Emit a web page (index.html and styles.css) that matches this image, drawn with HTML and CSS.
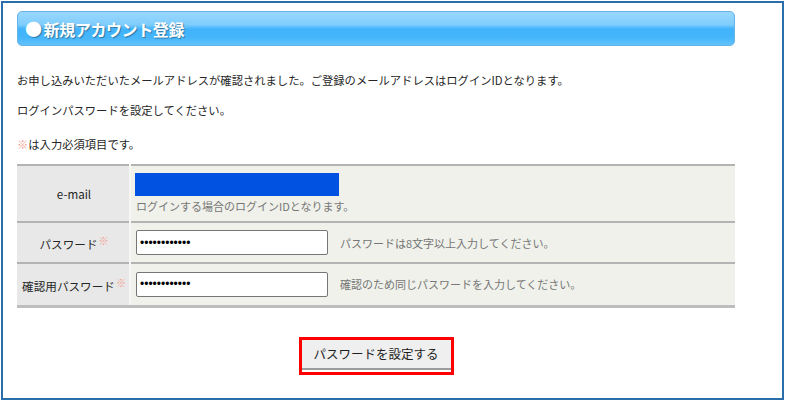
FILE: index.html
```html
<!DOCTYPE html>
<html lang="ja">
<head>
<meta charset="utf-8">
<title>新規アカウント登録</title>
<link rel="stylesheet" href="styles.css">
</head>
<body>
<div class="page">
  <h1 class="title"><span class="title-dot">●</span>新規アカウント登録</h1>

  <p class="lead">お申し込みいただいたメールアドレスが確認されました。ご登録のメールアドレスはログインIDとなります。</p>
  <p class="lead lead-second">ログインパスワードを設定してください。</p>
  <p class="lead lead-note"><span class="req">※</span>は入力必須項目です。</p>

  <table class="form-table">
    <tr class="row-mail">
      <th>e-mail</th>
      <td>
        <div class="mail-value"></div>
        <div class="hint hint-below">ログインする場合のログインIDとなります。</div>
      </td>
    </tr>
    <tr class="row-pass">
      <th>パスワード<span class="req req-sup">※</span></th>
      <td>
        <div class="field">
          <input class="pass-input" type="password" value="password1234">
          <span class="hint">パスワードは8文字以上入力してください。</span>
        </div>
      </td>
    </tr>
    <tr class="row-confirm">
      <th>確認用パスワード<span class="req req-sup">※</span></th>
      <td>
        <div class="field">
          <input class="pass-input" type="password" value="password1234">
          <span class="hint">確認のため同じパスワードを入力してください。</span>
        </div>
      </td>
    </tr>
  </table>

  <div class="actions">
    <div class="submit-frame">
      <button class="submit" type="button">パスワードを設定する</button>
    </div>
  </div>
</div>
</body>
</html>
```

FILE: styles.css
```css
html, body {
  margin: 0;
  padding: 0;
  background: #ffffff;
}

body {
  font-family: "Noto Sans CJK JP", "Noto Sans", sans-serif;
  color: #262626;
}

/* outer frame of the form page */
.page {
  margin: 1px 0 0 1px;
  width: 783px;
  height: 399px;
  box-sizing: border-box;
  border: 2px solid #2a6fab;
  padding: 8px 0 0 14px;
}

/* glossy blue heading bar */
.title {
  margin: 0;
  width: 718px;
  height: 35px;
  box-sizing: border-box;
  border: 1px solid #66b4e6;
  border-radius: 5px;
  background: linear-gradient(to bottom,
    #9ad8fe 0%,
    #7fcdfd 38%,
    #40b3fb 52%,
    #46b6fb 78%,
    #63c3fd 100%);
  display: flex;
  align-items: center;
  padding: 0 0 0 7px;
  color: #ffffff;
  font-size: 16px;
  font-weight: bold;
  letter-spacing: -0.4px;
  text-shadow: 1px 1px 1px rgba(0, 0, 0, 0.35);
}

.title-dot {
  font-size: 17px;
  margin-right: 2px;
}

/* intro text */
.lead {
  margin: 26px 0 0 0;
  font-size: 11.3px;
  line-height: 16px;
}

.lead-second {
  margin-top: 14px;
}

.lead-note {
  margin-top: 18px;
}

.req {
  color: #f59a8e;
}

.req-sup {
  font-size: 10px;
  vertical-align: 4px;
  margin-left: 1px;
}

/* form table */
.form-table {
  margin-top: 12px;
  width: 718px;
  border-collapse: collapse;
  border-bottom: 3px solid #bdbdbd;
}

.form-table tr {
  border-top: 2px solid #b3b3b3;
}

.form-table th {
  width: 113px;
  box-sizing: border-box;
  background: #e8e8e8;
  border-right: 2px solid #f6f6f4;
  font-weight: normal;
  font-size: 11.6px;
  color: #262626;
  text-align: center;
  vertical-align: middle;
  padding: 0 0 0 2px;
}

.form-table td {
  background: #eff1ea;
  padding: 0 0 0 4px;
  vertical-align: middle;
}

.row-mail {
  height: 57px;
}

.row-pass {
  height: 41px;
}

.row-confirm {
  height: 43px;
}

.mail-value {
  width: 204px;
  height: 23px;
  background: #0152e0;
}

.hint {
  font-size: 11px;
  color: #767676;
}

.hint-below {
  margin-top: 2px;
  line-height: 16px;
  padding-left: 1px;
}

.field {
  display: flex;
  align-items: center;
  gap: 12px;
  padding-left: 1px;
}

.pass-input {
  width: 192px;
  height: 25px;
  box-sizing: border-box;
  margin: 0;
  border: 1px solid #767676;
  border-radius: 2px;
  background: #ffffff;
  padding: 0 0 0 3px;
  font-family: "Liberation Sans", sans-serif;
  font-size: 12px;
  color: #000000;
  outline: none;
}

/* submit button with red highlight frame */
.actions {
  width: 718px;
  display: flex;
  justify-content: center;
  margin-top: 29px;
}

.submit-frame {
  border: 3px solid #ff0000;
  background: #ffffff;
  padding: 0 0 2px 0;
}

.submit {
  display: block;
  width: 149px;
  height: 30px;
  box-sizing: border-box;
  margin: 0;
  border: none;
  border-bottom: 2px solid #9c9c9c;
  background: #efefef;
  padding: 0;
  font-family: "Noto Sans CJK JP", "Noto Sans", sans-serif;
  font-size: 12.5px;
  color: #1e1e1e;
  cursor: pointer;
}
```
